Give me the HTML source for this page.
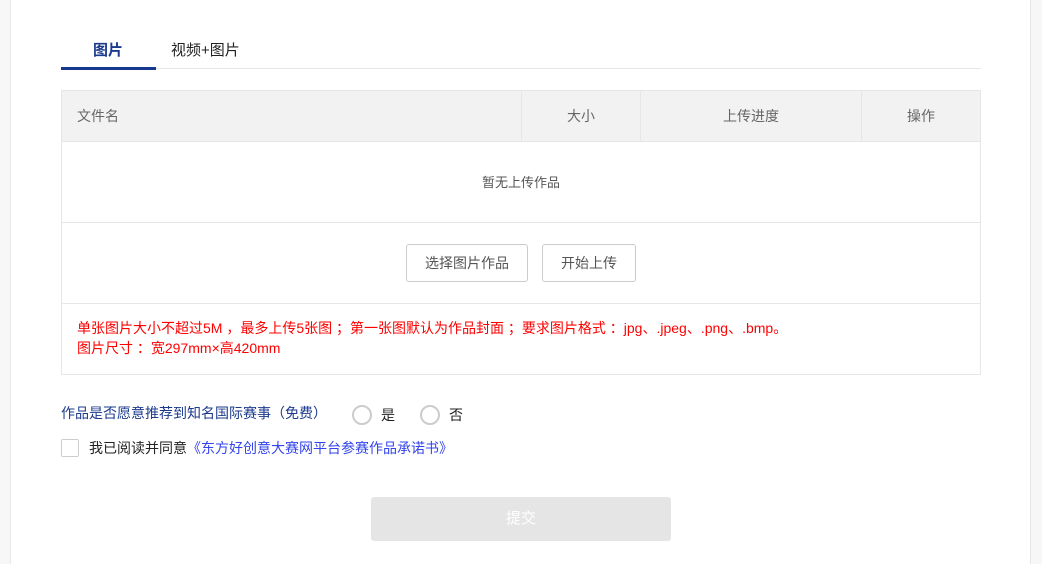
<!DOCTYPE html>
<html><head><meta charset="utf-8"><style>
*{margin:0;padding:0;box-sizing:border-box}
body{width:1042px;height:564px;background:#f7f7f7;font-family:"Liberation Sans","Noto Sans CJK SC",sans-serif;position:relative;overflow:hidden}
.card{position:absolute;left:10px;top:0;width:1021px;height:564px;background:#fff;border-left:1px solid #e8e8e8;border-right:1px solid #e8e8e8}
.a{position:absolute}
.tabline{left:61px;top:68px;width:920px;height:1px;background:#e6e6e6}
.tab{top:39px;font-size:15px}
.tbl{left:61px;top:90px;width:920px;height:285px;border:1px solid #e6e6e6}
.hd{left:0;top:0;width:918px;height:51px;background:#f2f2f2;border-bottom:1px solid #e6e6e6;font-size:14px;color:#666}
.vd{top:0;width:1px;height:51px;background:#e6e6e6}
.btn{top:153px;height:38px;border:1px solid #ccc;border-radius:3px;font-size:14px;color:#555;line-height:36px;text-align:center}
.radio{width:20px;height:20px;border:2px solid #ccc;border-radius:50%}
</style></head><body>
<div class="card"></div>
<div class="a tab" style="left:93px;color:#1b3a8c;font-weight:bold">图片</div>
<div class="a tab" style="left:171px;color:#222">视频+图片</div>
<div class="a tabline"></div>
<div class="a" style="left:61px;top:67px;width:95px;height:3px;background:#16398f"></div>
<div class="a tbl">
 <div class="a hd">
  <div class="a" style="left:15px;top:15px">文件名</div>
  <div class="a vd" style="left:459px"></div>
  <div class="a" style="left:505px;top:15px">大小</div>
  <div class="a vd" style="left:578px"></div>
  <div class="a" style="left:661px;top:15px">上传进度</div>
  <div class="a vd" style="left:799px"></div>
  <div class="a" style="left:845px;top:15px">操作</div>
 </div>
 <div class="a" style="left:0;top:81px;width:918px;text-align:center;font-size:13px;color:#555">暂无上传作品</div>
 <div class="a" style="left:0;top:131px;width:918px;height:1px;background:#e6e6e6"></div>
 <div class="a btn" style="left:344px;width:122px">选择图片作品</div>
 <div class="a btn" style="left:480px;width:94px">开始上传</div>
 <div class="a" style="left:0;top:212px;width:918px;height:1px;background:#e6e6e6"></div>
 <div class="a" style="left:15px;top:227px;font-size:14px;color:#f00;line-height:20px">单张图片大小不超过5M ，最多上传5张图 ；第一张图默认为作品封面 ；要求图片格式 ：jpg、.jpeg、.png、.bmp。<br>图片尺寸 ：宽297mm×高420mm</div>
</div>
<div class="a" style="left:61px;top:403px;font-size:14px;color:#1b3a8c">作品是否愿意推荐到知名国际赛事（免费）</div>
<div class="a radio" style="left:352px;top:405px"></div>
<div class="a" style="left:381px;top:405px;font-size:14px;color:#222">是</div>
<div class="a radio" style="left:420px;top:405px"></div>
<div class="a" style="left:449px;top:405px;font-size:14px;color:#222">否</div>
<div class="a" style="left:61px;top:439px;width:18px;height:18px;border:1px solid #ccc;border-radius:2px"></div>
<div class="a" style="left:89px;top:438px;font-size:14px;color:#222">我已阅读并同意<span style="color:#3344ee">《东方好创意大赛网平台参赛作品承诺书》</span></div>
<div class="a" style="left:371px;top:497px;width:300px;height:44px;background:#e5e5e5;border-radius:3px;color:#fff;font-size:15px;text-align:center;line-height:44px">提交</div>
</body></html>
